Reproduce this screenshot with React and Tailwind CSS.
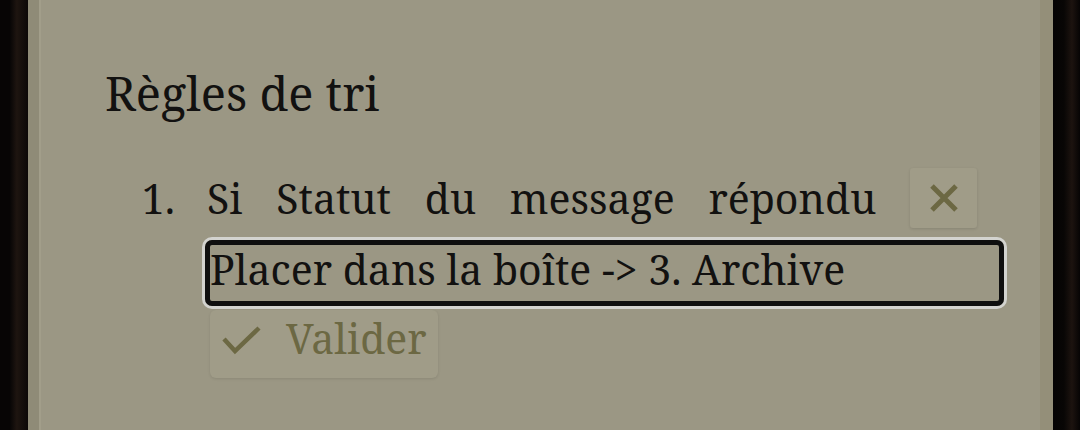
export default function App(){
  const font = { fontFamily: '"Noto Serif", "DejaVu Serif", serif' };
  return (
    <div className="w-[1080px] h-[430px] flex overflow-hidden" style={font}>
      <div className="w-[28px] h-full bg-[linear-gradient(90deg,#070505_0%,#070505_35%,#1e1510_60%,#0c0807_100%)]" />
      <div className="w-[13px] h-full bg-[#8f8b77] border-r-2 border-[#a29e8a]" />
      <div className="flex-1 h-full bg-[#9b9784] text-[#121110]">
        <div className="pl-[64px] pt-[70px]">
          <h2 className="text-[47px] leading-[47px] font-normal">Règles de tri</h2>
        </div>
        <div className="mt-[51px] flex">
          <div className="w-[166px] shrink-0 text-right pr-[32px] text-[41px] leading-[60px]">1.</div>
          <div className="w-[804px] shrink-0 flex flex-col">
            <div className="w-[770px] flex items-center justify-between text-[41px] leading-[60px] h-[60px]">
              <span>Si</span>
              <span>Statut</span>
              <span>du</span>
              <span>message</span>
              <span>répondu</span>
              <span className="w-[67px] h-[60px] flex items-center justify-center bg-[#a09c88] rounded-[3px] shadow-[0_1px_3px_rgba(0,0,0,0.12)]">
                <svg width="28" height="28" viewBox="0 0 28 28" fill="none" stroke="#6c6843" strokeWidth="5" strokeLinecap="butt">
                  <path d="M2 2 L26 26 M26 2 L2 26" />
                </svg>
              </span>
            </div>
            <div className="mt-[12px] ml-[-2px] w-[799px] h-[66px] border-[5px] border-[#0f0f0f] rounded-[7px] shadow-[0_0_0_3px_#d3d3cf] text-[41px] leading-[49px] whitespace-nowrap">
              Placer dans la boîte -&gt; 3. Archive
            </div>
            <div className="mt-[4px] ml-[3px] w-[228px] h-[68px] flex items-start bg-[#a09c88] rounded-[6px] shadow-[0_1px_3px_rgba(0,0,0,0.10)] text-[#6c6843]">
              <svg className="ml-[12px] mt-[15px]" width="40" height="30" viewBox="0 0 40 30" fill="none" stroke="#6c6843" strokeWidth="4.5">
                <path d="M2 14 L13 26 L37 3" />
              </svg>
              <span className="ml-[24px] mt-[4px] text-[41px] leading-[48px]">Valider</span>
            </div>
          </div>
        </div>
      </div>
      <div className="w-[13px] h-full bg-[#948f79]" />
      <div className="w-[27px] h-full bg-[linear-gradient(90deg,#050404_0%,#080605_40%,#1c130f_70%,#060404_100%)]" />
    </div>
  );
}
